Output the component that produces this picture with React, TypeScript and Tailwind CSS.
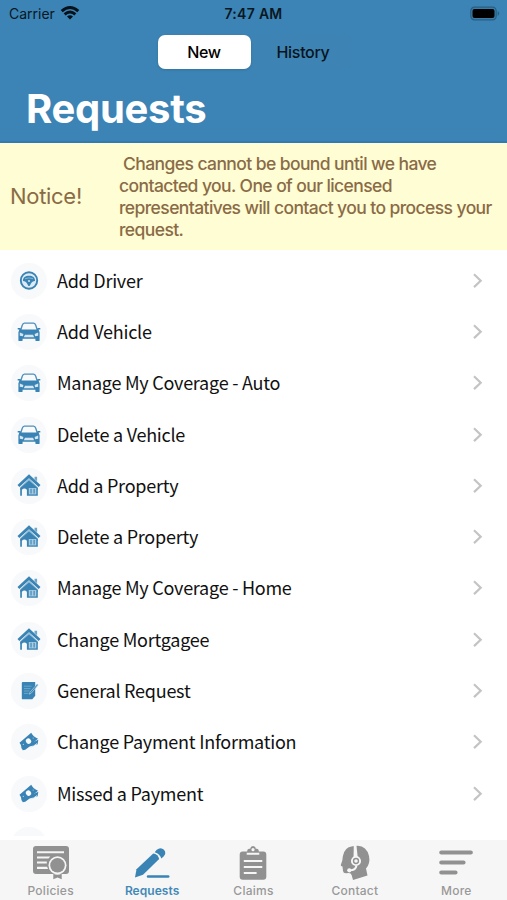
import type { ReactNode } from 'react';

type IconName = 'wheel' | 'car' | 'house' | 'note' | 'cash' | 'blank';

const requests: { label: string; icon: IconName }[] = [
  { label: 'Add Driver', icon: 'wheel' },
  { label: 'Add Vehicle', icon: 'car' },
  { label: 'Manage My Coverage - Auto', icon: 'car' },
  { label: 'Delete a Vehicle', icon: 'car' },
  { label: 'Add a Property', icon: 'house' },
  { label: 'Delete a Property', icon: 'house' },
  { label: 'Manage My Coverage - Home', icon: 'house' },
  { label: 'Change Mortgagee', icon: 'house' },
  { label: 'General Request', icon: 'note' },
  { label: 'Change Payment Information', icon: 'cash' },
  { label: 'Missed a Payment', icon: 'cash' },
  { label: '', icon: 'blank' },
];

const rowIcons: Record<IconName, ReactNode> = {
  wheel: (
    <>
      <circle cx="12" cy="11.500" r="8.200" fill="#dfebf4" stroke="#3a84b5" strokeWidth="1.900" />
      <path d="M6 12C5.700 8.300 8.500 6.700 12 6.700s6.300 1.600 6 5.300c-1.900.3-3.300 1-4 2.400L12.600 17h-1.200L10 14.400C9.300 13 7.900 12.300 6 12z" fill="#3a84b5" />
      <path d="M8 9.700q4-1.600 8 0" stroke="#8fbbd7" strokeWidth=".9" fill="none" />
      <circle cx="12" cy="12" r="1.100" fill="#c9dfed" />
    </>
  ),
  car: (
    <>
      <path d="M3.600 10.300 5.300 5.100Q5.900 3.100 7.400 3.100h9.200q1.500 0 2.100 2l1.700 5.200" fill="none" stroke="#4d90bc" strokeWidth="1.400" />
      <path d="M.7 7.900h2.600l1 1.600h15.400l1-1.600h2.600v1.500h-1.700l1 2.900v7.900q0 .9-.9.900h-2.400q-.9 0-.9-.9v-1.500H5.600v1.500q0 .9-.9.900H2.300q-.9 0-.9-.9v-7.900l1-2.900H.7z" fill="#3a84b5" />
      <path d="m2.800 12.500 3.600 1.500-.5 2.200-3.100-.5zm18.400 0-3.600 1.500.5 2.200 3.100-.5zM8 14.700h8l1.200 2.500H6.800z" fill="#d5e6f1" />
    </>
  ),
  house: (
    <>
      <path d="M17.500 2.800h2.600v4.500l-2.600-2.200z" fill="#6ea6ca" />
      <path d="M3 13.500 12 4.500l9 9V16H3z" fill="#8ebbd7" />
      <path d="M12 .3 23.500 11 21.700 12.900 12 4.300 2.300 12.900.5 11z" fill="#3a84b5" />
      <path d="m3.200 14 8.800-7.500 8.800 7.500v7.700H3.200z" fill="#3a84b5" />
      <path d="M4.900 22.300v-6.500q2.500-2.600 5 0v6.500z" fill="#f8f9fb" />
      <path d="M11.800 14h7.500v6.400h-7.500z" fill="#a9cbe0" />
      <path d="M13.300 14.700h1.500v4.700h-1.500zm3.100 0h1.500v4.700h-1.500z" fill="#5597c1" />
    </>
  ),
  note: (
    <>
      <path d="M5.800 3h12.400v13.700l-2.900 3.600H5.800q-1 0-1-.9V4q0-1 1-1z" fill="#3a84b5" />
      <path d="M7 7.200h7.500M7 9.600h6.500M7 12h5.500M7 14.400h4.500" stroke="#78adcf" strokeWidth=".8" />
      <path d="m20.200 5 1 .9-6.900 8.200-1.900 1.100.6-1.900z" fill="#3a84b5" stroke="#c5dcea" strokeWidth=".6" />
    </>
  ),
  cash: (
    <>
      <path d="m4.600 17.500 1.100 2.800q2.700-.2 4.900-2.400 2.800-2.500 5.900-2 .8-1.200 4.200-1.600l.6-4.600z" fill="#3a84b5" />
      <path d="m2.500 12.700 11.700-10q1.900 3.900 6.800 6-4.900 3.300-7.500 7.600-4.100-.9-8.800 2.400 0-3.700-2.200-6z" fill="#3a84b5" />
      <ellipse cx="11.500" cy="11.200" rx="2.500" ry="2.800" transform="rotate(-40 11.500 11.200)" fill="#f8f9fb" />
      <path d="M13.700 17.200q3-.7 6.500-3.900" fill="none" stroke="#d8e7f1" strokeWidth=".9" />
      <circle cx="6.300" cy="14.400" r=".6" fill="#b7d3e5" />
      <circle cx="16.200" cy="8" r=".6" fill="#b7d3e5" />
    </>
  ),
  blank: null,
};

const tabs: { label: string; icon: ReactNode }[] = [
  {
    label: 'Policies',
    icon: (
      <>
        <path fillRule="evenodd" d="M5 1h30q3 0 3 3v22q0 3-3 3H5q-3 0-3-3V4q0-3 3-3zM6 6.200v2.100h27V6.200zm0 5.200v2.100h11.500l1.800-2.100zm0 5.100v2.100h9.800v-2.100zm0 5.300v2.100h11l-.9-2.100z" fill="#919191" />
        <circle cx="26.500" cy="20.300" r="9" fill="#f6f6f6" />
        <circle cx="26.500" cy="20.300" r="7.300" fill="#919191" />
        <path d="M22.300 28.700q4.200 2 8.400 0v5.600l-4.200-1.800-4.200 1.800z" fill="#919191" />
      </>
    ),
  },
  {
    label: 'Requests',
    icon: (
      <>
        <path d="m3 32.500 1.500-8.200L21.200 8.500q5 .7 6 5.600L11 29.800z" fill="#3a84b5" />
        <path d="M22.700 7.200 24.500 5q4.200-3.500 7.500-.2 2.800 3.500-.4 6.600l-2.300 2.200q-1.200-4.800-6.600-6.400z" fill="#3a84b5" />
        <path d="M16 31.600h20.200" stroke="#3a84b5" strokeWidth="2.500" strokeLinecap="round" />
      </>
    ),
  },
  {
    label: 'Claims',
    icon: (
      <>
        <path d="M9.700 6.500h4.500Q14 4.300 16 3.700h1.200q.3-2.600 2.800-2.600t2.800 2.600H24q2 .6 1.800 2.800h4.500q3 0 3 3V31.700q0 3-3 3H9.700q-3 0-3-3V9.500q0-3 3-3z" fill="#919191" />
        <circle cx="20" cy="4.700" r="1.600" fill="#f6f6f6" />
        <path d="M13.700 8.700h12.600M10.800 16h18.500M10.800 22h18.500M10.800 28h12.800" stroke="#f6f6f6" strokeWidth="2.100" />
      </>
    ),
  },
  {
    label: 'Contact',
    icon: (
      <>
        <path d="M17.500 1.200Q9 2.300 7.800 11.500L7.300 15.500 5.800 20q-.3 1 1.700 1.500l.5 4.500q.3 2.600 3.500 2.300 4.500-1 5.200 2l1.300 4.700 14.500-4.500-1.500-7q4.500-5 3-12.500Q31.500 1 22.700.8z" fill="#919191" />
        <path d="m18.800 0 2.600-.1L22.800 13l-4.300.3z" fill="#f6f6f6" />
        <circle cx="21" cy="16" r="4.100" fill="#919191" stroke="#f6f6f6" strokeWidth="1.900" />
        <circle cx="21" cy="16" r="1.800" fill="#f6f6f6" />
        <path d="M21.500 20.500q-.7 5-6.800 4.900" fill="none" stroke="#f6f6f6" strokeWidth="1.900" />
        <circle cx="14.300" cy="25.300" r="2.100" fill="#f6f6f6" />
      </>
    ),
  },
  {
    label: 'More',
    icon: <path d="M5.300 7.500h29.500M5.300 17.500h22.200M5.300 27.500h14.200" stroke="#919191" strokeWidth="4.200" strokeLinecap="round" />,
  },
];

function StatusBar() {
  return (
    <div className="grid h-7 grid-cols-3 items-center px-[9px] text-[14px] leading-7 text-[#091722]">
      <div className="flex items-center gap-[5px]">
        <span>Carrier</span>
        <svg className="-mt-[2px]" width="20" height="16" viewBox="0 0 20 16" fill="none" stroke="#06121b" strokeWidth="2.900">
          <path d="M1.700 6.200q8.300-7.400 16.600 0M4.600 9.400q5.400-4.700 10.800 0" />
          <path d="M7 11.500q3-2.500 6 0l-3 3z" fill="#06121b" stroke="none" />
        </svg>
      </div>
      <span className="text-center text-[14px] font-semibold tracking-[0.3px]">7:47 AM</span>
      <svg className="-mr-[2px] justify-self-end" width="30" height="16" viewBox="0 0 30 16">
        <rect x=".8" y="1.200" width="25.400" height="12.600" rx="3.700" fill="#3a7da8" stroke="#285f83" strokeWidth="1.200" />
        <rect x="2.500" y="3" width="22" height="9" rx="2" fill="#000" />
        <path d="M27.700 5q3 2.500 0 5z" fill="#285f83" />
      </svg>
    </div>
  );
}

function RequestRow({ label, icon }: { label: string; icon: IconName }) {
  return (
    <div className="flex h-[51.300px] shrink-0 items-center pr-[24px] pl-[11px]">
      <div className="flex size-[36px] shrink-0 items-center justify-center rounded-full bg-[#f8f9fb]">
        <svg width="24" height="24" viewBox="0 0 24 24">{rowIcons[icon]}</svg>
      </div>
      <span className="mb-[2px] ml-[10px] flex-1 font-['Noto_Sans_CJK_SC','Noto_Sans',sans-serif] text-[18px] leading-6 tracking-[-0.250px] whitespace-nowrap text-[#111]">{label}</span>
      {label && (
        <svg width="11" height="18" viewBox="0 0 11 18" fill="none" stroke="#c4c4c6" strokeWidth="2.200">
          <path d="m2 2.300 6.700 6.400L2 15.100" />
        </svg>
      )}
    </div>
  );
}

export default function App() {
  return (
    <div className="flex h-[900px] w-[507px] flex-col overflow-hidden bg-white font-['Inter','Liberation_Sans',sans-serif]">
      <header className="h-[143px] shrink-0 border-b-2 border-[#327bb2] bg-[#3b84b5]">
        <StatusBar />
        <div className="mx-auto mt-[6px] flex h-[36px] w-[194px] rounded-lg bg-[#3d83b3] p-[1px] text-[16px] leading-[34px] font-medium tracking-[-0.3px] text-black">
          <button className="w-[93px] rounded-[7px] bg-white shadow-sm">New</button>
          <button className="flex-1 pl-[6px] text-[#06131d]">History</button>
        </div>
        <h1 className="mt-[15px] ml-[26px] text-[40px] leading-[48px] font-bold tracking-[-0.3px] text-white">Requests</h1>
      </header>

      <section className="flex h-[106.500px] shrink-0 items-center bg-[#fffdd3] pt-[2px] text-[#8a6b47]">
        <h2 className="mb-[2px] w-[119px] pl-[10px] text-[22px] tracking-[-0.3px] whitespace-nowrap">Notice!</h2>
        <p className="text-[17.500px] leading-[22px] font-[450] tracking-[-0.590px] whitespace-pre">
          {' Changes cannot be bound until we have'}
          <br />
          contacted you. One of our licensed
          <br />
          representatives will contact you to process your
          <br />
          request.
        </p>
      </section>

      <main className="flex h-[586.500px] shrink-0 flex-col overflow-hidden pt-[5.500px]">
        {requests.map((r, i) => (
          <RequestRow key={i} {...r} />
        ))}
      </main>

      <nav className="mt-[4px] grid h-[60px] shrink-0 grid-cols-5 bg-[#f6f6f6]">
        {tabs.map((tab) => (
          <div key={tab.label} className="flex flex-col items-center pt-[5px]">
            <svg width="40" height="36" viewBox="0 0 40 36">{tab.icon}</svg>
            <span className={`mt-[2px] text-[12px] leading-4 ${tab.label === 'Requests' ? 'font-semibold tracking-[0.050px] text-[#4389b7]' : 'font-medium tracking-[0.250px] text-[#999]'}`}>{tab.label}</span>
          </div>
        ))}
      </nav>
    </div>
  );
}
